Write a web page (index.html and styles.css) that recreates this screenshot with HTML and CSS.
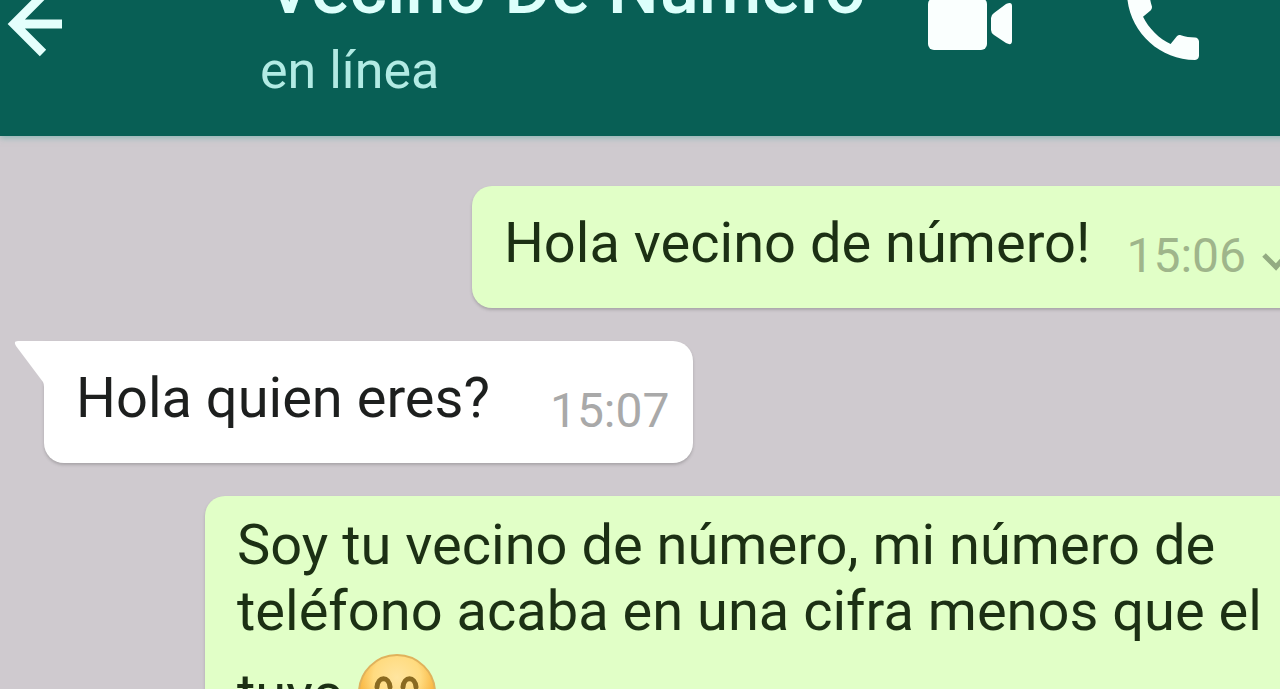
FILE: index.html
```html
<!DOCTYPE html>
<html lang="es">
<head>
  <meta charset="UTF-8">
  <meta name="viewport" content="width=device-width, initial-scale=1.0">
  <title>Vecino De Número</title>
  <link rel="stylesheet" href="styles.css">
</head>
<body>
  <div class="app">

    <header class="header">
      <button class="icon-btn back" aria-label="Volver">
        <svg width="60" height="72" viewBox="0 0 60 72">
          <path d="M60 36H12M41 65L12 36L41 7" fill="none" stroke="#e4fffc" stroke-width="9"/>
        </svg>
      </button>

      <div class="contact">
        <h1>Vecino De Número</h1>
        <p>en línea</p>
      </div>

      <button class="icon-btn" aria-label="Videollamada">
        <svg width="84" height="52" viewBox="0 0 84 52">
          <rect x="0" y="0" width="59" height="52" rx="6"/>
          <path d="M63 20Q63 17 66 15L78 6Q84 3 84 8V43Q84 48 78 45L66 37Q63 35 63 32Z"/>
        </svg>
      </button>
      <button class="icon-btn" aria-label="Llamar">
        <svg width="96" height="96" viewBox="0 0 24 24">
          <path d="M20.01 15.38c-1.23 0-2.42-.2-3.53-.56-.35-.12-.74-.03-1.01.24l-1.57 1.97c-2.83-1.35-5.48-3.9-6.89-6.83l1.95-1.66c.27-.28.35-.67.24-1.02-.37-1.11-.56-2.3-.56-3.53 0-.54-.45-.99-.99-.99H4.19C3.65 3 3 3.24 3 3.99 3 13.28 10.73 21 20.01 21c.71 0 .99-.63.99-1.18v-3.45c0-.54-.45-.99-.99-.99z"/>
        </svg>
      </button>
    </header>

    <main class="chat">
      <div class="msg out">
        <p>Hola vecino de número!</p>
        <time>15:06</time>
        <svg class="ticks" width="60" height="40" viewBox="0 0 60 40">
          <path d="M2 19L14 31L36 6M22 28L26 31L52 6"/>
        </svg>
      </div>

      <div class="msg in">
        <svg class="tail" width="32" height="46" viewBox="0 0 32 46">
          <path d="M32 0H4Q-1 0 2 5L29 41Q30 43 30 46H32Z"/>
        </svg>
        <p>Hola quien eres?</p>
        <time>15:07</time>
      </div>

      <div class="msg out long">
        <p>Soy tu vecino de número, mi número de teléfono acaba en una cifra menos que el tuyo
          <svg class="emoji" width="78" height="78" viewBox="0 0 78 78">
            <defs>
              <radialGradient id="face" cx="50%" cy="30%" r="62%">
                <stop offset="0" stop-color="#ffe5a0"/>
                <stop offset="0.5" stop-color="#ffdb80"/>
                <stop offset="1" stop-color="#f5a01c"/>
              </radialGradient>
            </defs>
            <circle cx="39" cy="39" r="38" fill="url(#face)" stroke="#e0b25c" stroke-width="2"/>
            <path d="M19 33C20 22 31 22 32 33M45 33C46 22 57 22 58 33" fill="none" stroke="#8a6a20" stroke-width="5" stroke-linecap="round"/>
            <path d="M22 50Q39 68 56 50" fill="none" stroke="#8a6a20" stroke-width="4" stroke-linecap="round"/>
          </svg>
        </p>
      </div>
    </main>

  </div>
</body>
</html>
```

FILE: styles.css
```css
* {
  box-sizing: border-box;
}
body {
  margin: 0;
  height: 100vh;
  overflow: hidden;
  font-family: Roboto, "Liberation Sans", sans-serif;
  background-color: #cfcacf;
}
h1, p {
  margin: 0;
}

/* the view is a bit wider than the window and scrolled under its top edge */
.app {
  width: calc(100% + 88px);
  margin-top: -88px;
}

.header {
  display: flex;
  align-items: center;
  height: 224px;
  padding-right: 157px;
  background-color: #085f55;
  box-shadow: 0 2px 6px rgba(100, 170, 165, 0.6);
}
.icon-btn {
  display: flex;
  padding: 0;
  border: none;
  background: none;
  cursor: pointer;
}
.icon-btn svg {
  fill: #fafffe;
}
.back {
  padding-left: 2px;
}
.contact {
  flex: 1;
  padding-top: 14px;
  padding-left: 198px;
  white-space: nowrap;
}
.contact h1 {
  padding-left: 6px;
  font-size: 72px;
  font-weight: 500;
  line-height: 80px;
  color: #dcfffb;
}
.contact p {
  font-size: 52px;
  line-height: 84px;
  color: #b2ebe4;
}
.icon-btn + .icon-btn {
  margin-left: 103px;
}

.chat {
  display: flex;
  flex-direction: column;
  align-items: flex-start;
  gap: 33px;
  padding: 50px 22px 50px 44px;
}
.msg {
  position: relative;
  display: flex;
  align-items: flex-end;
  padding: 24px 24px 24px 32px;
  border-radius: 20px;
  font-size: 56px;
  line-height: 66px;
  color: #1d1f1e;
  background-color: #fff;
  box-shadow: 0 2px 3px rgba(60, 60, 60, 0.25);
}
.msg p {
  margin-bottom: 8px;
}
.msg time {
  margin-left: 60px;
  font-size: 48px;
  line-height: 56px;
  color: #a9a9a9;
}
.out {
  align-self: flex-end;
  color: #1c3014;
  background-color: #e1ffc7;
}
.out time {
  margin-left: 36px;
  color: #9fb58b;
}
.in {
  border-top-left-radius: 0;
}
.long {
  max-width: 1141px;
  padding-top: 16px;
}
.tail {
  position: absolute;
  top: 0;
  left: -30px;
  fill: #fff;
}
.ticks {
  margin-left: 16px;
  margin-bottom: 8px;
  fill: none;
  stroke: #93ab82;
  stroke-width: 5px;
}
.emoji {
  margin-top: 10px;
  vertical-align: -19px;
}
```
